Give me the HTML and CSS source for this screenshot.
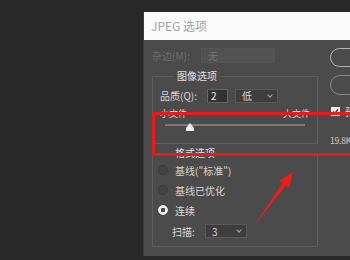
FILE: index.html
```
<!DOCTYPE html>
<html lang="zh">
<head>
    <meta charset="UTF-8">
    <title>JPEG 选项</title>
    <link rel="stylesheet" href="styles.css">
</head>
<body>
<div class="desk">
    <div class="dialog">
        <div class="title">JPEG 选项</div>
        <div class="body">
            <div class="left">
                <div class="matte">
                    <span class="label">杂边(M):</span>
                    <span class="select disabled">无</span>
                </div>

                <fieldset class="group g1">
                    <legend>图像选项</legend>
                    <div class="quality">
                        <span class="label">品质(Q):</span>
                        <span class="input">2</span>
                        <span class="select low">低<i class="caret"></i></span>
                    </div>
                    <div class="slider">
                        <div class="ends">
                            <span>小文件</span>
                            <span>大文件</span>
                        </div>
                        <div class="track"></div>
                        <svg class="thumb" width="10" height="8" viewBox="0 0 10 8">
                            <path d="M5 0 L9 5 L9 8 L1 8 L1 5 Z" fill="#f2f2f2"/>
                        </svg>
                    </div>
                </fieldset>

                <fieldset class="group g2">
                    <legend>格式选项</legend>
                    <div class="radio"><i class="dot"></i>基线("标准")</div>
                    <div class="radio"><i class="dot"></i>基线已优化</div>
                    <div class="radio"><i class="dot on"></i>连续</div>
                    <div class="scan">
                        <span class="label">扫描:</span>
                        <span class="select three">3<i class="caret"></i></span>
                    </div>
                </fieldset>
            </div>

            <div class="right">
                <div class="btn"></div>
                <div class="btn"></div>
                <div class="check">
                    <svg class="box" width="9" height="9" viewBox="0 0 9 9">
                        <rect width="9" height="9" fill="#eee"/>
                        <path d="M2 4.5 L3.8 6.5 L7 2.3" fill="none" stroke="#333" stroke-width="1.4"/>
                    </svg>预览(P)
                </div>
                <div class="size">19.8K</div>
            </div>
        </div>
    </div>
</div>

<div class="mark"></div>
<svg class="arrow" width="350" height="260" viewBox="0 0 350 260">
    <path d="M255.4 223.5 L256.6 222.5 L285.8 185.4 L289.1 187.7 L293 172 L279.3 180.7 L282.6 183 Z" fill="#ee1d1f"/>
</svg>
</body>
</html>
```
FILE: styles.css
```
* {
    margin: 0;
    padding: 0;
    box-sizing: border-box;
}

body {
    width: 350px;
    height: 260px;
    overflow: hidden;
    background: #282828;
    font-family: "Noto Sans CJK SC", "Noto Sans", sans-serif;
    font-size: 10px;
    color: #d8d8d8;
    position: relative;
}

.desk {
    padding: 12px 0 0 143px;
}

.dialog {
    width: 230px;
    height: 244px;
    display: flex;
    flex-direction: column;
    border-left: 1px solid #3a3a3a;
}

.title {
    height: 28px;
    line-height: 28px;
    background: #fbfbfb;
    color: #a2a2a2;
    font-size: 12px;
    padding-left: 7px;
}

.body {
    flex: 1;
    background: #4b4b4b;
    display: flex;
    overflow: hidden;
}

.left {
    width: 174px;
    padding: 8px 0 0 8px;
}

.matte {
    display: flex;
    align-items: center;
    height: 15px;
}

.matte .label {
    color: #6f6f6f;
    width: 49px;
}

.select {
    display: flex;
    align-items: center;
    height: 15px;
    background: #3e3e3e;
    border: 1px solid #5a5a5a;
    padding-left: 6px;
    position: relative;
}

.select.disabled {
    width: 74px;
    background: #525252;
    border-color: #565656;
    color: #777;
}

.caret {
    position: absolute;
    right: 5px;
    top: 3px;
    width: 4px;
    height: 4px;
    border-right: 1px solid #aaa;
    border-bottom: 1px solid #aaa;
    transform: rotate(45deg);
}

.group {
    border: 1px solid #5e5e5e;
    width: 166px;
    min-width: 0;
}

.group legend {
    margin-left: 14px;
    padding: 0 3px;
    line-height: 14px;
    color: #e0e0e0;
}

.g1 {
    margin-top: 6px;
    padding: 0 0 17px 7px;
}

.quality {
    display: flex;
    align-items: center;
    height: 13px;
    margin-top: 6px;
}

.quality .label {
    width: 47px;
}

.input {
    width: 21px;
    height: 14px;
    line-height: 12px;
    background: #333;
    border: 1px solid #666;
    padding-left: 3px;
    color: #eee;
}

.select.low {
    margin-left: 7px;
    width: 43px;
    height: 14px;
}

.slider {
    position: relative;
    width: 150px;
    margin-top: 6px;
}

.ends {
    display: flex;
    justify-content: space-between;
    font-size: 9px;
    line-height: 11px;
}

.track {
    height: 2px;
    margin: 5px 5px 0;
    background: #7a7a7a;
}

.thumb {
    position: absolute;
    left: 25px;
    top: 15px;
}

.g2 {
    margin-top: 2px;
    padding: 0 0 8px 5px;
}

.radio {
    display: flex;
    align-items: center;
    height: 20px;
}

.dot {
    width: 10px;
    height: 10px;
    border-radius: 50%;
    background: #444;
    border: 1px solid #3b3b3b;
    margin-right: 7px;
}

.dot.on {
    border-color: #ececec;
    background-image: radial-gradient(circle, #444 0, #444 2px, #ececec 2.5px);
}

.scan {
    display: flex;
    align-items: center;
    margin-top: 4px;
    height: 14px;
    padding-left: 14px;
}

.scan .label {
    width: 33px;
}

.select.three {
    width: 42px;
    height: 14px;
}

.right {
    padding: 8px 0 0 12px;
    width: 60px;
}

.btn {
    width: 70px;
    height: 19px;
    border: 1.5px solid #b3b3b3;
    border-radius: 10px;
}

.btn + .btn {
    margin-top: 8px;
    height: 20px;
    border-color: #8a8a8a;
}

.check {
    display: flex;
    align-items: center;
    margin-top: 12px;
    padding-left: 1px;
    height: 9px;
    white-space: nowrap;
}

.box {
    flex: none;
    margin-right: 5px;
}

.size {
    margin-top: 18px;
    font-size: 8.5px;
    line-height: 12px;
    letter-spacing: -0.2px;
    color: #cfcfcf;
}

.mark {
    position: absolute;
    left: 152px;
    top: 112px;
    width: 215px;
    height: 44px;
    border: 3.5px solid #e81b1e;
    border-radius: 3px;
}

.arrow {
    position: absolute;
    left: 0;
    top: 0;
}
```
